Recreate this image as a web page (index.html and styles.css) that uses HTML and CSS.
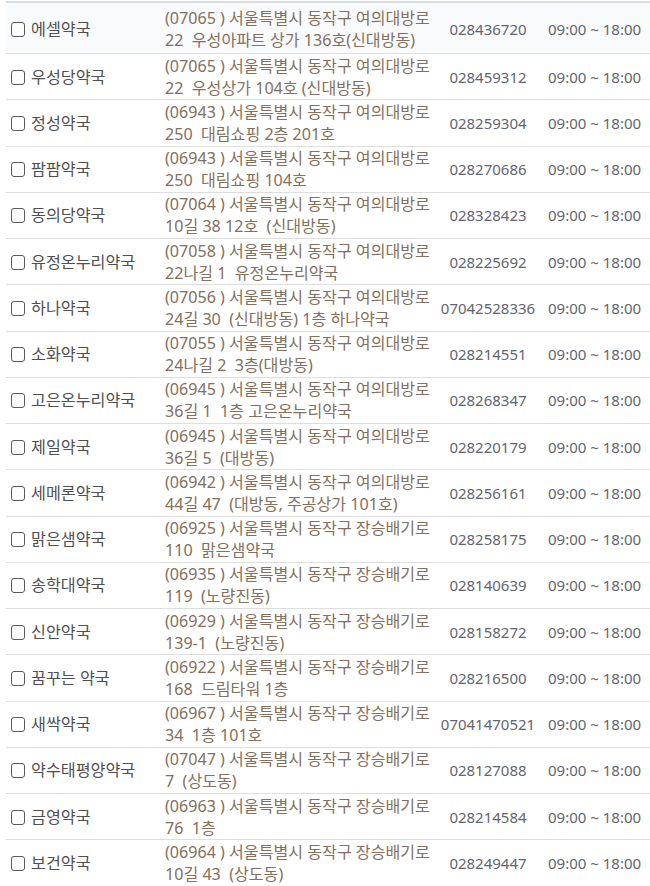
FILE: index.html
```html
<!DOCTYPE html>
<html>
<head>
<meta charset="utf-8">
<title>약국 목록</title>
<link rel="stylesheet" href="styles.css">
</head>
<body>

<table class="list">
<tr class="first">
  <td class="name"><span class="chk"></span>에셀약국</td>
  <td class="addr">(07065 ) 서울특별시 동작구 여의대방로<br>22&nbsp; 우성아파트 상가 136호(신대방동)</td>
  <td class="tel">028436720</td>
  <td class="time">09:00 ~ 18:00</td>
</tr>
<tr>
  <td class="name"><span class="chk"></span>우성당약국</td>
  <td class="addr">(07065 ) 서울특별시 동작구 여의대방로<br>22&nbsp; 우성상가 104호 (신대방동)</td>
  <td class="tel">028459312</td>
  <td class="time">09:00 ~ 18:00</td>
</tr>
<tr>
  <td class="name"><span class="chk"></span>정성약국</td>
  <td class="addr">(06943 ) 서울특별시 동작구 여의대방로<br>250&nbsp; 대림쇼핑 2층 201호</td>
  <td class="tel">028259304</td>
  <td class="time">09:00 ~ 18:00</td>
</tr>
<tr>
  <td class="name"><span class="chk"></span>팜팜약국</td>
  <td class="addr">(06943 ) 서울특별시 동작구 여의대방로<br>250&nbsp; 대림쇼핑 104호</td>
  <td class="tel">028270686</td>
  <td class="time">09:00 ~ 18:00</td>
</tr>
<tr>
  <td class="name"><span class="chk"></span>동의당약국</td>
  <td class="addr">(07064 ) 서울특별시 동작구 여의대방로<br>10길 38 12호&nbsp; (신대방동)</td>
  <td class="tel">028328423</td>
  <td class="time">09:00 ~ 18:00</td>
</tr>
<tr>
  <td class="name"><span class="chk"></span>유정온누리약국</td>
  <td class="addr">(07058 ) 서울특별시 동작구 여의대방로<br>22나길 1&nbsp; 유정온누리약국</td>
  <td class="tel">028225692</td>
  <td class="time">09:00 ~ 18:00</td>
</tr>
<tr>
  <td class="name"><span class="chk"></span>하나약국</td>
  <td class="addr">(07056 ) 서울특별시 동작구 여의대방로<br>24길 30&nbsp; (신대방동) 1층 하나약국</td>
  <td class="tel">07042528336</td>
  <td class="time">09:00 ~ 18:00</td>
</tr>
<tr>
  <td class="name"><span class="chk"></span>소화약국</td>
  <td class="addr">(07055 ) 서울특별시 동작구 여의대방로<br>24나길 2&nbsp; 3층(대방동)</td>
  <td class="tel">028214551</td>
  <td class="time">09:00 ~ 18:00</td>
</tr>
<tr>
  <td class="name"><span class="chk"></span>고은온누리약국</td>
  <td class="addr">(06945 ) 서울특별시 동작구 여의대방로<br>36길 1&nbsp; 1층 고은온누리약국</td>
  <td class="tel">028268347</td>
  <td class="time">09:00 ~ 18:00</td>
</tr>
<tr>
  <td class="name"><span class="chk"></span>제일약국</td>
  <td class="addr">(06945 ) 서울특별시 동작구 여의대방로<br>36길 5&nbsp; (대방동)</td>
  <td class="tel">028220179</td>
  <td class="time">09:00 ~ 18:00</td>
</tr>
<tr>
  <td class="name"><span class="chk"></span>세메론약국</td>
  <td class="addr">(06942 ) 서울특별시 동작구 여의대방로<br>44길 47&nbsp; (대방동, 주공상가 101호)</td>
  <td class="tel">028256161</td>
  <td class="time">09:00 ~ 18:00</td>
</tr>
<tr>
  <td class="name"><span class="chk"></span>맑은샘약국</td>
  <td class="addr">(06925 ) 서울특별시 동작구 장승배기로<br>110&nbsp; 맑은샘약국</td>
  <td class="tel">028258175</td>
  <td class="time">09:00 ~ 18:00</td>
</tr>
<tr>
  <td class="name"><span class="chk"></span>송학대약국</td>
  <td class="addr">(06935 ) 서울특별시 동작구 장승배기로<br>119&nbsp; (노량진동)</td>
  <td class="tel">028140639</td>
  <td class="time">09:00 ~ 18:00</td>
</tr>
<tr>
  <td class="name"><span class="chk"></span>신안약국</td>
  <td class="addr">(06929 ) 서울특별시 동작구 장승배기로<br>139-1&nbsp; (노량진동)</td>
  <td class="tel">028158272</td>
  <td class="time">09:00 ~ 18:00</td>
</tr>
<tr>
  <td class="name"><span class="chk"></span>꿈꾸는 약국</td>
  <td class="addr">(06922 ) 서울특별시 동작구 장승배기로<br>168&nbsp; 드림타워 1층</td>
  <td class="tel">028216500</td>
  <td class="time">09:00 ~ 18:00</td>
</tr>
<tr>
  <td class="name"><span class="chk"></span>새싹약국</td>
  <td class="addr">(06967 ) 서울특별시 동작구 장승배기로<br>34&nbsp; 1층 101호</td>
  <td class="tel">07041470521</td>
  <td class="time">09:00 ~ 18:00</td>
</tr>
<tr>
  <td class="name"><span class="chk"></span>약수태평양약국</td>
  <td class="addr">(07047 ) 서울특별시 동작구 장승배기로<br>7&nbsp; (상도동)</td>
  <td class="tel">028127088</td>
  <td class="time">09:00 ~ 18:00</td>
</tr>
<tr>
  <td class="name"><span class="chk"></span>금영약국</td>
  <td class="addr">(06963 ) 서울특별시 동작구 장승배기로<br>76&nbsp; 1층</td>
  <td class="tel">028214584</td>
  <td class="time">09:00 ~ 18:00</td>
</tr>
<tr class="last">
  <td class="name"><span class="chk"></span>보건약국</td>
  <td class="addr">(06964 ) 서울특별시 동작구 장승배기로<br>10길 43&nbsp; (상도동)</td>
  <td class="tel">028249447</td>
  <td class="time">09:00 ~ 18:00</td>
</tr>
</table>

</body>
</html>
```

FILE: styles.css
```css
body {margin: 0; padding-top: 1px; background: #fff; font-family: "Noto Sans", "Noto Sans CJK KR", sans-serif; font-size: 15px; color: #555;}
table.list {margin-left: 6px; width: 660px; border-collapse: collapse; border-top: 2px solid #d8dce3; table-layout: fixed;}
table.list td {padding: 0; height: 45.25px; line-height: 22px; border-bottom: 1px solid #dedede; vertical-align: middle; white-space: nowrap; overflow: hidden;}
tr.first td {height: 49px; padding-top: 1px; background: #f9fafc;}
tr.last td {border-bottom: 3px solid #e6e6e6;}
td.name {width: 149px; padding-left: 5px !important; font-size: 16.2px; color: #505050;}
td.addr {width: 272px; padding-left: 5px !important; font-size: 16.1px; color: #84705c;}
td.tel {width: 102px; text-align: center; color: #62666e;}
td.time {text-align: left; padding-left: 9px !important; color: #62666e;}
span.chk {display: inline-block; width: 12px; height: 13px; border: 1px solid #5a5a5a; border-radius: 3px; margin-right: 6px; vertical-align: -2px; background: #fff;}
```
